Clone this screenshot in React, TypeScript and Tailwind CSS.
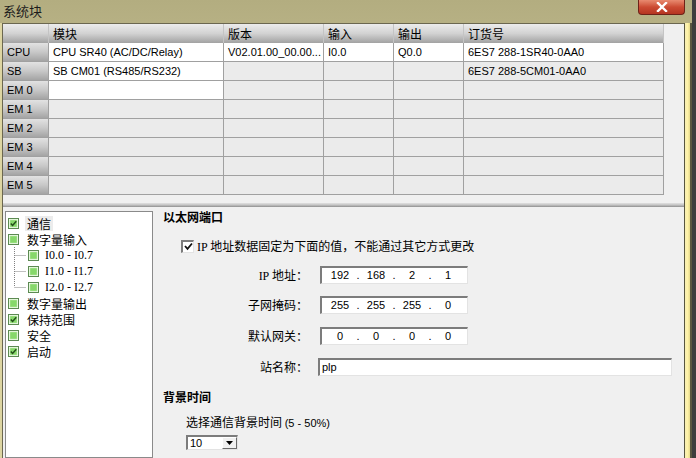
import React from 'react';

const cjk = "font-['Noto_Sans_CJK_SC',sans-serif]";
const latin = "font-['Liberation_Sans','Noto_Sans_CJK_SC',sans-serif]";

const cols = ['w-[46px]', 'w-[175px]', 'w-[100px]', 'w-[70px]', 'w-[70px]', 'w-[200px]'];

const rows = [
  { head: 'CPU', cells: ['CPU SR40 (AC/DC/Relay)', 'V02.01.00_00.00...', 'I0.0', 'Q0.0', '6ES7 288-1SR40-0AA0'], white: [true, true, true, true, true] },
  { head: 'SB', cells: ['SB CM01 (RS485/RS232)', '', '', '', '6ES7 288-5CM01-0AA0'], white: [true, false, false, false, false] },
  { head: 'EM 0', cells: ['', '', '', '', ''], white: [true, false, false, false, false] },
  { head: 'EM 1', cells: ['', '', '', '', ''], white: [false, false, false, false, false] },
  { head: 'EM 2', cells: ['', '', '', '', ''], white: [false, false, false, false, false] },
  { head: 'EM 3', cells: ['', '', '', '', ''], white: [false, false, false, false, false] },
  { head: 'EM 4', cells: ['', '', '', '', ''], white: [false, false, false, false, false] },
  { head: 'EM 5', cells: ['', '', '', '', ''], white: [false, false, false, false, false] },
];

const TreeBox = ({ checked }: { checked: boolean }) => (
  <svg width="11" height="11" viewBox="0 0 11 11" className="shrink-0">
    <rect x="0.5" y="0.5" width="10" height="10" fill="#f4fbef" stroke="#5c8a52" />
    <rect x="2" y="2" width="7" height="7" fill="#86d86a" stroke="#b8eca4" strokeWidth="0.6" />
    {checked && <path d="M2.8 5.4 L4.6 7.4 L8.3 3.2" fill="none" stroke="#24501a" strokeWidth="1.5" />}
  </svg>
);

const TreeItem = ({ label, checked, selected }: { label: string; checked: boolean; selected?: boolean }) => (
  <div className="h-[16px] flex items-center pl-[2px]">
    <TreeBox checked={checked} />
    <span className={`ml-[6px] px-[2px] text-[12px] leading-[15px] text-black ${cjk} ${selected ? 'bg-[#ececec]' : ''}`}>{label}</span>
  </div>
);

const TreeSub = ({ label, last }: { label: string; last?: boolean }) => (
  <div className="h-[16px] flex items-center pl-[2px]">
    <svg width="19" height="16" viewBox="0 0 19 16" className="shrink-0">
      <line x1="6.5" y1="0" x2="6.5" y2={last ? 8 : 16} stroke="#808080" strokeDasharray="1 1" />
      <line x1="6.5" y1="8.5" x2="18" y2="8.5" stroke="#808080" strokeDasharray="1 1" />
    </svg>
    <span className="ml-[1px]"><TreeBox checked={false} /></span>
    <span className="ml-[6px] text-[12px] leading-[15px] text-black font-['Liberation_Serif',serif]">{label}</span>
  </div>
);

const sunken = 'border-t-2 border-l-2 border-t-[#7c7c7c] border-l-[#7c7c7c] border-r border-b border-r-[#e3e3e3] border-b-[#e3e3e3] bg-white';

const IpField = ({ parts }: { parts: string[] }) => (
  <div className={`w-[148px] h-[18px] flex items-center pl-[6px] ${sunken} ${latin} text-[11px] text-black`}>
    {parts.map((p, i) => (
      <React.Fragment key={i}>
        <span className="w-[24px] text-center">{p}</span>
        {i < 3 && <span className="w-[12px] text-center">.</span>}
      </React.Fragment>
    ))}
  </div>
);

const Label = ({ children }: { children: React.ReactNode }) => (
  <div className={`w-[145px] text-right text-[12px] leading-[18px] text-black ${cjk}`}>{children}</div>
);

export default function App() {
  return (
    <div className="w-[696px] h-[458px] overflow-hidden flex bg-[#454545]">
      <div className="w-[692px] h-full flex flex-col bg-gradient-to-b from-[#b3ad80] via-[#d3cda4] to-[#e2dcb6]">
        {/* title bar */}
        <div className="h-[23px] shrink-0 flex items-start justify-between pl-[3px] pr-[7px]">
          <span className={`mt-[2px] text-[13px] leading-[17px] text-[#1c1c1c] ${cjk}`}>系统块</span>
          <div className="w-[47px] h-[15px] rounded-b-[4px] border border-t-0 border-[#6e2218] bg-gradient-to-b from-[#e88a70] via-[#cc4b33] to-[#b53421] flex items-center justify-center">
            <svg width="12" height="10" viewBox="0 0 12 10">
              <path d="M2 1 L10 9 M10 1 L2 9" stroke="#ffffff" strokeWidth="2.4" strokeLinecap="square" />
            </svg>
          </div>
        </div>

        <div className="flex flex-1 min-h-0">
          <div className="w-[2px] bg-[#ddd5a2]" />
          <div className="flex-1 flex flex-col bg-[#f0f0f0] border-t border-l border-[#6b6750] min-w-0">
            {/* module table */}
            <div className="flex flex-col">
              <div className="flex h-[19px]">
                {['', '模块', '版本', '输入', '输出', '订货号'].map((h, i) => (
                  <div
                    key={i}
                    className={`${cols[i]} h-full border-r border-[#c4c4c4] bg-gradient-to-b from-[#ececec] via-[#d2d2d2] to-[#a2a2a2] pl-[4px] text-[12px] leading-[19px] text-black ${cjk}`}
                  >
                    {h}
                  </div>
                ))}
              </div>
              {rows.map((r) => (
                <div key={r.head} className="flex h-[19px]">
                  <div className={`${cols[0]} h-full border-r border-b border-[#a0a0a0] bg-gradient-to-b from-[#e2e2e2] via-[#c8c8c8] to-[#a4a4a4] pl-[4px] text-[11px] leading-[18px] text-black ${latin}`}>
                    {r.head}
                  </div>
                  {r.cells.map((c, i) => (
                    <div
                      key={i}
                      className={`${cols[i + 1]} h-full border-r border-b border-[#a0a0a0] ${r.white[i] ? 'bg-white' : 'bg-[#ebebeb]'} pl-[4px] text-[11px] leading-[18px] text-black whitespace-nowrap overflow-hidden ${latin}`}
                    >
                      {c}
                    </div>
                  ))}
                </div>
              ))}
            </div>

            <div className="h-[8px] shrink-0" />
            {/* splitter */}
            <div className="h-[4px] shrink-0 bg-gradient-to-b from-[#e0e0e0] via-[#c4c4c4] to-[#8e8e8e]" />

            <div className="flex flex-1 min-h-0">
              {/* tree */}
              <div className="ml-[2px] mt-[4px] w-[148px] border border-[#8a8a8a] bg-white pt-[3px] shrink-0">
                <TreeItem label="通信" checked selected />
                <TreeItem label="数字量输入" checked={false} />
                <TreeSub label="I0.0 - I0.7" />
                <TreeSub label="I1.0 - I1.7" />
                <TreeSub label="I2.0 - I2.7" last />
                <TreeItem label="数字量输出" checked={false} />
                <TreeItem label="保持范围" checked />
                <TreeItem label="安全" checked={false} />
                <TreeItem label="启动" checked />
              </div>

              {/* settings */}
              <div className="ml-[10px] flex flex-col">
                <div className={`mt-[3px] h-[14px] text-[12px] leading-[14px] font-bold text-black ${cjk}`}>以太网端口</div>

                <div className="mt-[15px] h-[14px] flex items-center pl-[18px]">
                  <div className={`w-[13px] h-[13px] flex items-center justify-center ${sunken}`}>
                    <svg width="9" height="9" viewBox="0 0 9 9">
                      <path d="M1 4 L3.5 6.8 L8 1.5" fill="none" stroke="#111" strokeWidth="1.8" />
                    </svg>
                  </div>
                  <span className={`ml-[3px] text-[12px] leading-[14px] text-black ${cjk}`}>
                    <span className="font-['Liberation_Serif',serif] text-[12px]">IP</span> 地址数据固定为下面的值，不能通过其它方式更改
                  </span>
                </div>

                <div className="mt-[13px] flex items-center h-[18px]">
                  <Label><span className="font-['Liberation_Serif',serif] text-[12px]">IP</span> 地址：</Label>
                  <div className="ml-[12px]"><IpField parts={['192', '168', '2', '1']} /></div>
                </div>
                <div className="mt-[12px] flex items-center h-[18px]">
                  <Label>子网掩码：</Label>
                  <div className="ml-[12px]"><IpField parts={['255', '255', '255', '0']} /></div>
                </div>
                <div className="mt-[13px] flex items-center h-[18px]">
                  <Label>默认网关：</Label>
                  <div className="ml-[12px]"><IpField parts={['0', '0', '0', '0']} /></div>
                </div>
                <div className="mt-[13px] flex items-center h-[18px]">
                  <Label>站名称：</Label>
                  <div className={`ml-[10px] w-[354px] h-[18px] pl-[2px] text-[11px] leading-[15px] text-black ${latin} ${sunken}`}>plp</div>
                </div>

                <div className={`mt-[14px] h-[14px] text-[12px] leading-[14px] font-bold text-black ${cjk}`}>背景时间</div>
                <div className={`mt-[11px] h-[14px] pl-[23px] text-[12px] leading-[14px] text-black ${cjk}`}>
                  选择通信背景时间 <span className={`${latin} text-[11px]`}>(5 - 50%)</span>
                </div>
                <div className="mt-[6px] ml-[23px] flex">
                  <div className={`w-[52px] h-[15px] flex items-center justify-between ${sunken}`}>
                    <span className={`pl-[2px] text-[11px] leading-[13px] text-black ${latin}`}>10</span>
                    <div className="w-[15px] h-full bg-[#f0f0f0] border border-t-white border-l-white border-r-[#6a6a6a] border-b-[#6a6a6a] flex items-center justify-center">
                      <svg width="7" height="4" viewBox="0 0 7 4">
                        <path d="M0 0 L7 0 L3.5 4 Z" fill="#000" />
                      </svg>
                    </div>
                  </div>
                </div>
              </div>
            </div>
          </div>
          <div className="w-[8px] flex">
            <div className="w-[1px] bg-[#58553f]" />
            <div className="w-[5px] bg-gradient-to-r from-[#f6eeb4] via-[#fff3a8] to-[#e6d98a]" />
            <div className="w-[2px] bg-[#5a5640]" />
          </div>
        </div>
      </div>
      <div className="flex-1 bg-[#3e3e3e]" />
    </div>
  );
}
